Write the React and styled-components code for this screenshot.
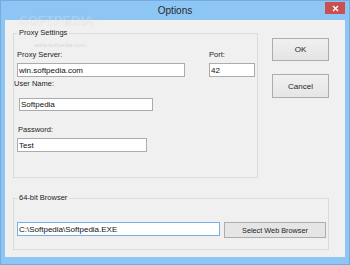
import React from "react";
import styled, { createGlobalStyle } from "styled-components";

const GlobalStyle = createGlobalStyle`
  html, body {
    margin: 0;
    padding: 0;
    background: #8dc6f4;
  }
  body {
    font-family: "Liberation Sans", Arial, sans-serif;
  }
`;

const App = () => {
  return (
    <>
      <GlobalStyle />
      <Window>
        <TitleBar>
          Options
          <CloseButton>
            <svg width="7" height="7" viewBox="0 0 7 7">
              <path d="M1 1 L6 6 M6 1 L1 6" stroke="#fff" strokeWidth="1.4" />
            </svg>
          </CloseButton>
        </TitleBar>

        <Client>
          <TopRow>
            <Group $width={245} $padBottom={25}>
              <Legend>Proxy Settings</Legend>
              <FieldRow>
                <Field $left={3} $top={12}>
                  <Label>Proxy Server:</Label>
                  <TextBox $width={168} $top={3} value="win.softpedia.com" readOnly />
                </Field>
                <Field $left={24} $top={12}>
                  <Label>Port:</Label>
                  <TextBox $width={46} $top={3} value="42" readOnly />
                </Field>
              </FieldRow>

              <Field $left={0} $top={2}>
                <Label>User Name:</Label>
                <TextBox $width={134} $height={13} $left={5} $top={9} value="Softpedia" readOnly />
              </Field>

              <Field $left={4} $top={14}>
                <Label>Password:</Label>
                <TextBox $width={130} $left={-1} $top={3} value="Test" readOnly />
              </Field>
            </Group>

            <ButtonColumn>
              <DialogButton $top={10} $height={23}>OK</DialogButton>
              <DialogButton $top={13} $height={24}>Cancel</DialogButton>
            </ButtonColumn>
          </TopRow>

          <BrowserGroup $width={316} $padBottom={11}>
            <Legend>64-bit Browser</Legend>
            <BrowserRow>
              <TextBox $width={203} $left={3} $focused value="C:\Softpedia\Softpedia.EXE" readOnly />
              <BrowseButton>Select Web Browser</BrowseButton>
            </BrowserRow>
          </BrowserGroup>
        </Client>

        <Watermark>
          SOFTPEDIA<sup>™</sup>
        </Watermark>
        <WatermarkUrl>www.softpedia.com</WatermarkUrl>
      </Window>
    </>
  );
};

const Window = styled.div`
  position: relative;
  box-sizing: border-box;
  width: 350px;
  height: 265px;
  background: #8dc6f4;
  border: 1px solid #74ace0;
  padding: 0 4px 7px 4px;
  display: flex;
  flex-direction: column;
  overflow: hidden;
`;

const TitleBar = styled.div`
  position: relative;
  height: 19px;
  flex: none;
  display: flex;
  align-items: center;
  justify-content: center;
  font-size: 10px;
  color: #2a2a2a;
  padding-bottom: 1px;
  box-sizing: border-box;
`;

const CloseButton = styled.div`
  position: absolute;
  right: 0;
  top: 1px;
  width: 20px;
  height: 12px;
  background: #c9504e;
  display: flex;
  align-items: center;
  justify-content: center;
`;

const Client = styled.div`
  flex: 1;
  background: #f0f0f0;
  display: flex;
  flex-direction: column;
  padding: 8px 0 0 8px;
  box-sizing: border-box;
`;

const TopRow = styled.div`
  display: flex;
  align-items: flex-start;
`;

const Group = styled.fieldset`
  box-sizing: border-box;
  width: ${(p) => p.$width}px;
  margin: 0;
  padding: 0 0 ${(p) => p.$padBottom}px 0;
  min-width: 0;
  border: 1px solid #dadada;
`;

const BrowserGroup = styled(Group)`
  margin-top: 15px;
`;

const Legend = styled.legend`
  margin-left: 3px;
  padding: 0 2px;
  font-size: 7.5px;
  line-height: 10px;
  color: #1e1e1e;
`;

const FieldRow = styled.div`
  display: flex;
`;

const Field = styled.div`
  display: flex;
  flex-direction: column;
  align-items: flex-start;
  margin-left: ${(p) => p.$left}px;
  margin-top: ${(p) => p.$top}px;
`;

const Label = styled.div`
  font-size: 7.5px;
  line-height: 10px;
  color: #1e1e1e;
`;

const TextBox = styled.input`
  box-sizing: border-box;
  width: ${(p) => p.$width}px;
  height: ${(p) => p.$height || 14}px;
  margin: ${(p) => p.$top || 0}px 0 0 ${(p) => p.$left || 0}px;
  padding: 0 0 0 1px;
  border: 1px solid ${(p) => (p.$focused ? "#7aaee6" : "#acacac")};
  background: #fff;
  font-family: "Liberation Sans", Arial, sans-serif;
  font-size: 8px;
  color: #111;
  outline: none;
`;

const ButtonColumn = styled.div`
  display: flex;
  flex-direction: column;
  margin-left: 14px;
`;

const DialogButton = styled.button`
  box-sizing: border-box;
  width: 57px;
  height: ${(p) => p.$height}px;
  margin-top: ${(p) => p.$top}px;
  padding: 0;
  border: 1px solid #acacac;
  background: linear-gradient(#f0f0f0, #e5e5e5);
  font-family: "Liberation Sans", Arial, sans-serif;
  font-size: 8px;
  color: #1e1e1e;
`;

const BrowserRow = styled.div`
  display: flex;
  align-items: flex-start;
  margin-top: 19px;
`;

const BrowseButton = styled(DialogButton)`
  width: 102px;
  height: 16px;
  margin: 0 0 0 4px;
  border-color: #adadad;
  background: #e5e5e5;
  font-size: 7.3px;
`;

const Watermark = styled.div`
  position: absolute;
  left: 18px;
  top: 13px;
  pointer-events: none;
  font-size: 13px;
  font-weight: bold;
  line-height: 13px;
  color: rgba(255, 255, 255, 0.25);
  -webkit-text-stroke: 0.4px rgba(150, 150, 150, 0.25);

  sup {
    font-size: 5px;
    vertical-align: top;
  }
`;

const WatermarkUrl = styled.div`
  position: absolute;
  left: 33px;
  top: 41px;
  pointer-events: none;
  font-size: 6px;
  line-height: 6px;
  color: rgba(160, 160, 160, 0.35);
`;

export default App;
